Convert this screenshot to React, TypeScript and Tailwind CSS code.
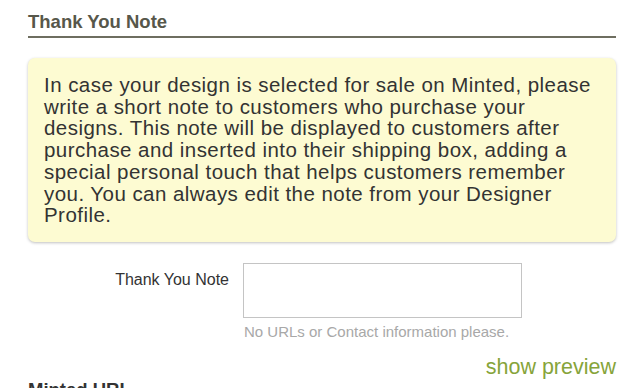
export default function App() {
  return (
    <div
      className="w-[630px] h-[388px] overflow-hidden bg-white pl-[28px] pr-[14px] pt-[11px]"
      style={{ fontFamily: '"Liberation Sans", Arial, sans-serif' }}
    >
      {/* Section heading */}
      <h2 className="text-[18.5px] leading-[22px] font-bold text-[#57574a] pb-[3px] border-b-2 border-[#6e6e60]">
        Thank You Note
      </h2>

      {/* Yellow info box */}
      <div className="mt-[20px] rounded-[7px] bg-[#fdfbd2] shadow-[0_1px_3px_rgba(0,0,0,0.25)] pl-[16px] pr-[10px] pt-[16px] pb-[16px]">
        <p className="text-[20.5px] leading-[21.7px] tracking-[0.45px] text-[#333333]">
          In case your design is selected for sale on Minted, please write a
          short note to customers who purchase your designs. This note will be
          displayed to customers after purchase and inserted into their
          shipping box, adding a special personal touch that helps customers
          remember you. You can always edit the note from your Designer
          Profile.
        </p>
      </div>

      {/* Form row */}
      <div className="mt-[21px] flex">
        <label className="w-[201px] text-right text-[16px] leading-[19px] text-[#333333] pt-[7px]">
          Thank You Note
        </label>
        <div className="ml-[14px]">
          <textarea className="block w-[279px] h-[55px] border border-[#c4c4c4] bg-white resize-none outline-none" />
          <p className="mt-[5px] ml-[1px] text-[15px] leading-[18px] text-[#a8a8a8]">
            No URLs or Contact information please.
          </p>
        </div>
      </div>

      <div className="mt-[15px] flex justify-end">
        <a className="text-[21.5px] leading-[23px] text-[#86a43a]">show preview</a>
      </div>

      <h2 className="text-[18.5px] leading-[22px] font-bold text-[#333333]">
        Minted URL
      </h2>
    </div>
  );
}
